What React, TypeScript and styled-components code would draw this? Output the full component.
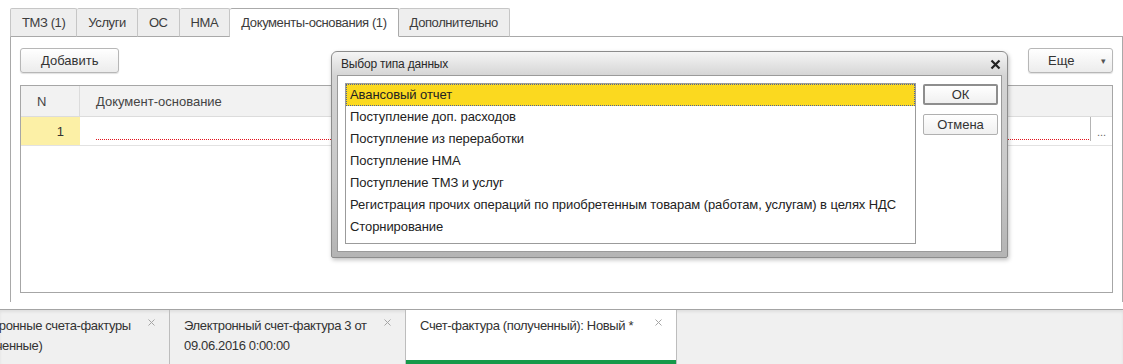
import React from 'react';
import styled, { createGlobalStyle } from 'styled-components';

const GlobalStyle = createGlobalStyle`
	html, body {
		margin: 0;
		padding: 0;
		background: #fff;
	}
	body {
		font-family: 'Liberation Sans', Arial, sans-serif;
		font-size: 13px;
		color: #333;
	}
	#root {
		width: 1123px;
		height: 364px;
		overflow: hidden;
	}
`;

const formTabs = [
	{ title: 'ТМЗ (1)' },
	{ title: 'Услуги' },
	{ title: 'ОС' },
	{ title: 'НМА' },
	{ title: 'Документы-основания (1)', active: true },
	{ title: 'Дополнительно' },
];

const dataTypes = [
	'Авансовый отчет',
	'Поступление доп. расходов',
	'Поступление из переработки',
	'Поступление НМА',
	'Поступление ТМЗ и услуг',
	'Регистрация прочих операций по приобретенным товарам (работам, услугам) в целях НДС',
	'Сторнирование',
];

const windows = [
	{ title: 'Электронные счета-фактуры (полученные)', width: 219 },
	{ title: 'Электронный счет-фактура 3 от 09.06.2016 0:00:00', width: 236 },
	{ title: 'Счет-фактура (полученный): Новый *', width: 271, active: true },
];

const SmallCross = () => (
	<svg width='7' height='7' viewBox='0 0 7 7'>
		<path d='M0.5 0.5 L6.5 6.5 M6.5 0.5 L0.5 6.5' stroke='#a5a5a5' strokeWidth='1' />
	</svg>
);

const BoldCross = () => (
	<svg width='11' height='11' viewBox='0 0 11 11'>
		<path d='M1.5 1.5 L9.5 9.5 M9.5 1.5 L1.5 9.5' stroke='#222' strokeWidth='2.2' />
	</svg>
);

const App = () => {
	return (
		<Page>
			<GlobalStyle />
			<Workspace>
				<TabRow>
					{formTabs.map((t) => (
						<FormTab key={t.title} $active={t.active}>
							{t.title}
						</FormTab>
					))}
				</TabRow>
				<Panel>
					<Toolbar>
						<Button>Добавить</Button>
						<MoreButton>
							<span>Еще</span>
							<Caret>▾</Caret>
						</MoreButton>
					</Toolbar>
					<Table>
						<HeaderRow>
							<NumCell $head>N</NumCell>
							<DocCell>Документ-основание</DocCell>
						</HeaderRow>
						<Row>
							<NumCell $current>1</NumCell>
							<DocCell>
								<InputLine />
								<Ellipsis>...</Ellipsis>
							</DocCell>
						</Row>
					</Table>
				</Panel>

				<Dialog>
					<TitleBar>
						<span>Выбор типа данных</span>
						<BoldCross />
					</TitleBar>
					<DialogBody>
						<TypeList>
							{dataTypes.map((d, i) => (
								<TypeItem key={d} $selected={i === 0}>
									{d}
								</TypeItem>
							))}
						</TypeList>
						<DialogButtons>
							<DialogButton $default>ОК</DialogButton>
							<DialogButton>Отмена</DialogButton>
						</DialogButtons>
					</DialogBody>
				</Dialog>
			</Workspace>

			<Taskbar>
				<TaskStrip>
					{windows.map((w) => (
						<TaskTab key={w.title} $width={w.width} $active={w.active}>
							<TaskTitle>{w.title}</TaskTitle>
							<TaskClose>
								<SmallCross />
							</TaskClose>
						</TaskTab>
					))}
				</TaskStrip>
			</Taskbar>
		</Page>
	);
};

const Page = styled.div`
	width: 1123px;
	height: 364px;
	display: flex;
	flex-direction: column;
	overflow: hidden;
`;

const Workspace = styled.div`
	position: relative;
	height: 309px;
	box-sizing: border-box;
	padding: 8px 0 7px 10px;
	display: flex;
	flex-direction: column;
`;

const TabRow = styled.div`
	display: flex;
	height: 29px;
	margin-bottom: -1px;
	position: relative;
	z-index: 1;
`;

const FormTab = styled.div<{ $active?: boolean }>`
	box-sizing: border-box;
	height: 29px;
	padding: 0 11px;
	display: flex;
	align-items: center;
	font-size: 13px;
	letter-spacing: -0.4px;
	color: #3c3c3c;
	background: ${(p) => (p.$active ? '#fff' : '#eeeeee')};
	border-top: 1px solid ${(p) => (p.$active ? '#aaa' : '#c6c6c6')};
	border-right: 1px solid ${(p) => (p.$active ? '#aaa' : '#c6c6c6')};
	border-bottom: 1px solid ${(p) => (p.$active ? '#fff' : '#a9a9a9')};
	border-radius: 2px 2px 0 0;

	&:first-child {
		border-left: 1px solid #c6c6c6;
	}
`;

const Panel = styled.div`
	flex: 1;
	display: flex;
	flex-direction: column;
	border: 1px solid #a9a9a9;
	border-bottom: none;
	padding: 11px 9px 9px 9px;
	min-height: 0;
`;

const Toolbar = styled.div`
	display: flex;
	justify-content: space-between;
	height: 25px;
`;

const Button = styled.div`
	box-sizing: border-box;
	height: 25px;
	padding: 0 20px;
	display: flex;
	align-items: center;
	border: 1px solid #b7b7b7;
	border-radius: 3px;
	background: linear-gradient(#ffffff, #ececec);
	box-shadow: 0 1px 1px rgba(0, 0, 0, 0.12);
	color: #333;
`;

const MoreButton = styled(Button)`
	width: 85px;
	padding: 0 6px 0 19px;
	justify-content: space-between;
`;

const Caret = styled.span`
	font-size: 9px;
	color: #555;
`;

const Table = styled.div`
	flex: 1;
	margin-top: 12px;
	border: 1px solid #a6a6a6;
	display: flex;
	flex-direction: column;
`;

const HeaderRow = styled.div`
	display: flex;
	height: 31px;
	box-sizing: border-box;
	background: #f2f2f2;
	border-bottom: 1px solid #dcdcdc;
	align-items: stretch;
	color: #444;
`;

const Row = styled.div`
	display: flex;
	height: 29px;
	box-sizing: border-box;
	border-bottom: 1px solid #e2e2e2;
`;

const NumCell = styled.div<{ $head?: boolean; $current?: boolean }>`
	width: 59px;
	box-sizing: border-box;
	display: flex;
	align-items: center;
	justify-content: ${(p) => (p.$head ? 'flex-start' : 'flex-end')};
	padding: ${(p) => (p.$head ? '0 0 0 16px' : '0 15px 0 0')};
	border-right: 1px solid ${(p) => (p.$head ? '#dcdcdc' : 'transparent')};
	background: ${(p) => (p.$current ? '#fcf0a6' : 'transparent')};
`;

const DocCell = styled.div`
	flex: 1;
	display: flex;
	align-items: center;
	padding-left: 16px;
`;

const InputLine = styled.div`
	flex: 1;
	align-self: flex-start;
	height: 23px;
	background-image: linear-gradient(90deg, #e3121b 50%, transparent 50%);
	background-size: 2px 1px;
	background-repeat: repeat-x;
	background-position: left bottom;
`;

const Ellipsis = styled.div`
	width: 22px;
	height: 24px;
	align-self: flex-start;
	box-sizing: border-box;
	border-left: 1px solid #b4b4b4;
	display: flex;
	align-items: center;
	justify-content: center;
	padding-top: 6px;
	margin-left: 1px;
	font-size: 11px;
	color: #666;
`;

const Dialog = styled.div`
	position: absolute;
	left: 331px;
	top: 51px;
	z-index: 5;
	width: 677px;
	box-sizing: border-box;
	display: flex;
	flex-direction: column;
	border: 1px solid #8c8c8c;
	border-radius: 6px 6px 2px 2px;
	padding: 0 5px 5px 5px;
	background: linear-gradient(#f5f5f5 0px, #d4d4d4 24px, #c8c8c8 60%, #b4b4b4 100%);
	box-shadow: 1px 2px 4px rgba(0, 0, 0, 0.25);
`;

const TitleBar = styled.div`
	height: 23px;
	display: flex;
	align-items: center;
	justify-content: space-between;
	padding: 1px 1px 0 4px;
	box-sizing: border-box;
	font-size: 12px;
	letter-spacing: -0.2px;
	color: #2a2a2a;
`;

const DialogBody = styled.div`
	background: #fff;
	border: 1px solid #9a9a9a;
	display: flex;
	align-items: flex-start;
	gap: 7px;
	padding: 7px 3px 7px 7px;
`;

const TypeList = styled.div`
	width: 571px;
	height: 161px;
	box-sizing: border-box;
	border: 1px solid #9b9b9b;
`;

const TypeItem = styled.div<{ $selected?: boolean }>`
	height: 22px;
	box-sizing: border-box;
	line-height: 20px;
	padding-left: 3px;
	white-space: nowrap;
	letter-spacing: -0.08px;
	color: #222;
	background: ${(p) => (p.$selected ? '#fbd91f' : 'transparent')};
	border: 1px ${(p) => (p.$selected ? 'dotted #4f6294' : 'solid transparent')};
`;

const DialogButtons = styled.div`
	display: flex;
	flex-direction: column;
	gap: 9px;
	margin-top: 1px;
`;

const DialogButton = styled.div<{ $default?: boolean }>`
	width: 75px;
	height: 21px;
	box-sizing: border-box;
	display: flex;
	align-items: center;
	justify-content: center;
	border: ${(p) => (p.$default ? '2px solid #8e8e8e' : '1px solid #b0b0b0')};
	border-radius: 2px;
	background: linear-gradient(#ffffff, #f0f0f0);
	color: #333;
`;

const Taskbar = styled.div`
	flex: 1;
	background: #f0f0f0;
	border-top: 1px solid #a4a4a4;
	box-shadow: inset 0 2px 3px rgba(0, 0, 0, 0.07);
	overflow: hidden;
`;

const TaskStrip = styled.div`
	display: flex;
	height: 100%;
	margin-left: -49px;
`;

const TaskTab = styled.div<{ $width: number; $active?: boolean }>`
	width: ${(p) => p.$width}px;
	flex: none;
	box-sizing: border-box;
	display: flex;
	align-items: flex-start;
	gap: 6px;
	padding: 6px 14px 0 14px;
	border-right: 1px solid #bdbdbd;
	background: ${(p) => (p.$active ? '#fff' : 'transparent')};
	box-shadow: ${(p) => (p.$active ? 'inset 0 -4px 0 #16994a' : 'none')};
`;

const TaskTitle = styled.div`
	flex: 1;
	line-height: 20px;
	letter-spacing: -0.35px;
	color: #333;
`;

const TaskClose = styled.div`
	padding-top: 3px;
	line-height: 0;
`;

export default App;
